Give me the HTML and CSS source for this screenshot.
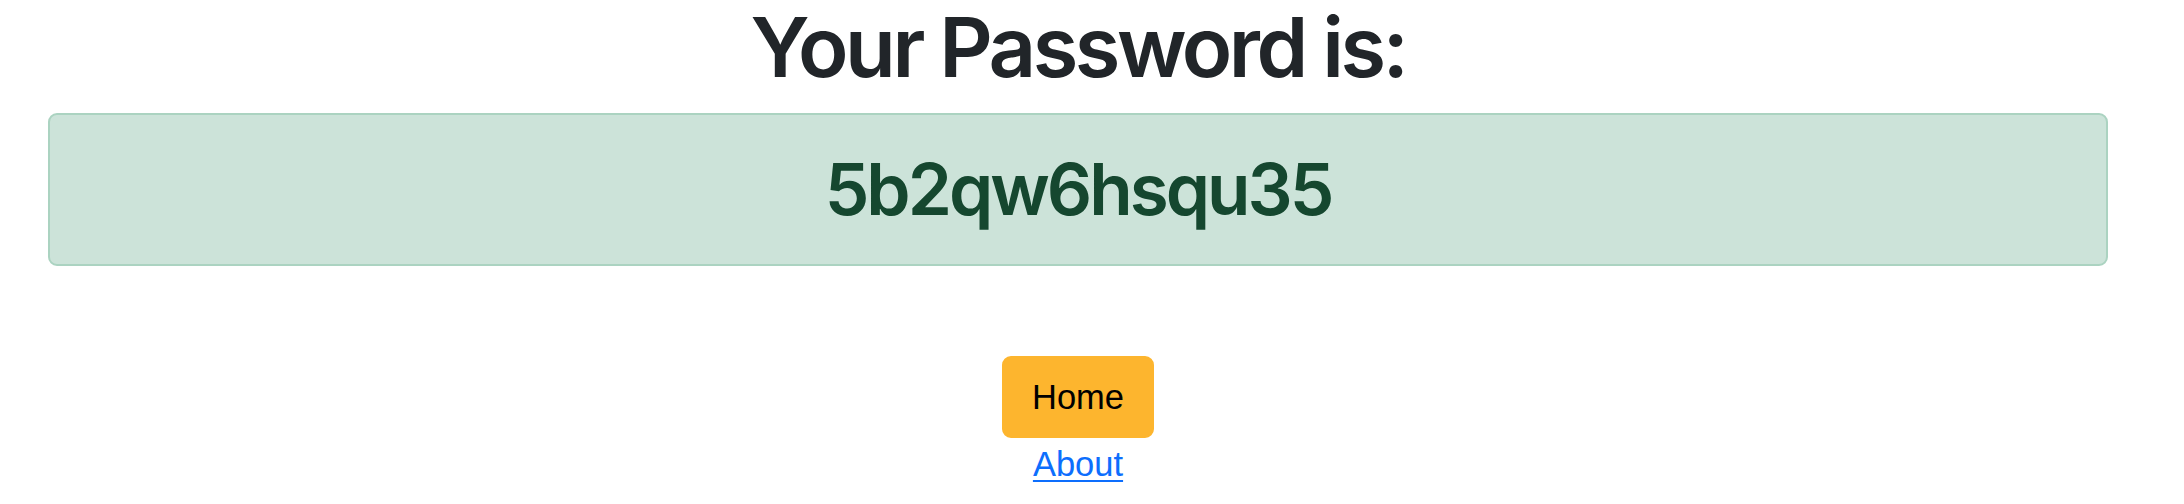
FILE: index.html
```html
<!DOCTYPE html>
<html lang="en">
<head>
<meta charset="utf-8">
<title>Password</title>
<link rel="stylesheet" href="styles.css">
</head>
<body>
<div class="page">
  <main class="container">
    <h1 class="title">Your Password is:</h1>
    <div class="alert">
      <h2 class="password">5b2qw6hsqu35</h2>
    </div>
    <nav class="actions">
      <a class="btn" href="#">Home</a>
      <a class="link" href="#">About</a>
    </nav>
  </main>
</div>
</body>
</html>
```

FILE: styles.css
```css
html, body {
  margin: 0;
  padding: 0;
  background: #ffffff;
}

.page {
  margin-right: 28px;
}

.container {
  padding: 0 48px;
  display: flex;
  flex-direction: column;
  align-items: stretch;
}

.title {
  margin: 0 0 23px 0;
  padding-top: 4px;
  font-family: Inter, "Liberation Sans", sans-serif;
  font-weight: 600;
  font-size: 83px;
  line-height: 86px;
  letter-spacing: -3.5px;
  color: #212529;
  text-align: center;
}

.alert {
  box-sizing: border-box;
  height: 153px;
  padding: 31px 20px;
  background: #cce3d9;
  border: 2px solid #abd3c1;
  border-radius: 9px;
  text-align: center;
}

.password {
  margin: 0;
  font-family: Inter, "Liberation Sans", sans-serif;
  font-weight: 600;
  font-size: 71px;
  line-height: 87px;
  letter-spacing: -3px;
  color: #15472f;
}

.actions {
  margin-top: 90px;
  display: flex;
  flex-direction: column;
  align-items: center;
  font-family: "Liberation Sans", Arial, sans-serif;
  font-size: 34.5px;
  line-height: 52px;
}

.btn {
  display: block;
  padding: 13px 28px;
  border: 2px solid #fdb52e;
  border-radius: 9px;
  background: #fdb52e;
  color: #000000;
  text-decoration: none;
}

.link {
  display: block;
  color: #0d6efd;
  text-decoration: underline;
  text-decoration-thickness: 2px;
  text-underline-offset: 4px;
}
```
